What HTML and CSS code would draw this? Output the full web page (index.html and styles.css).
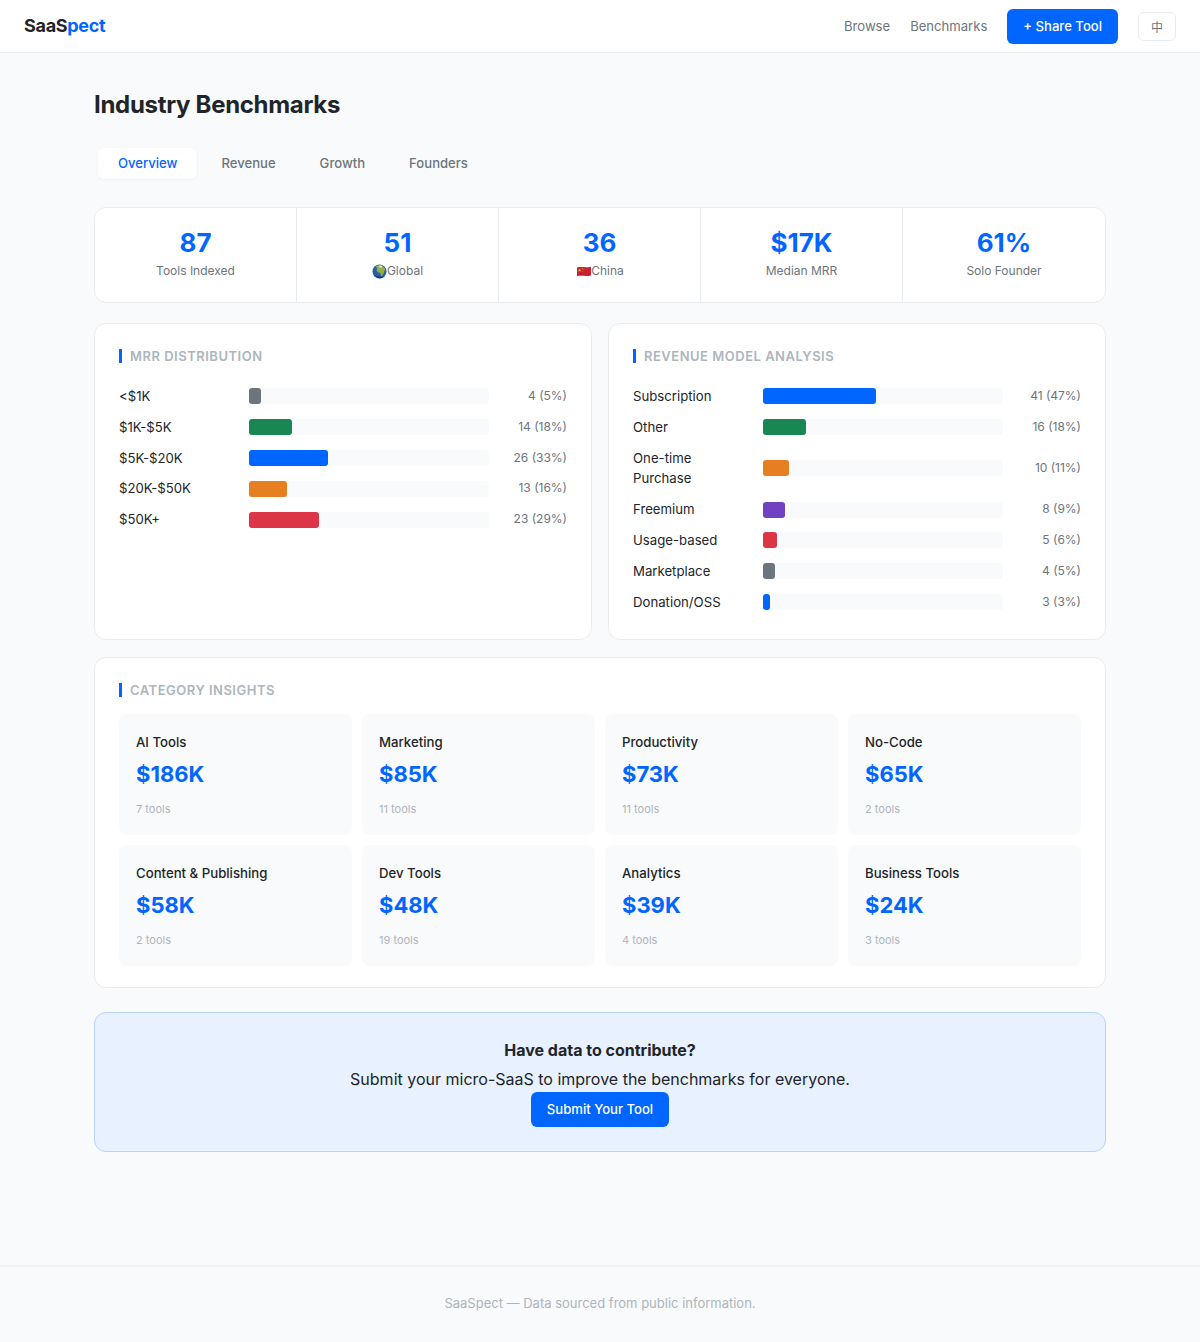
FILE: index.html
```html
<!DOCTYPE html>
<html lang="en">
    <head>
        <meta charset="utf-8">
        <title>SaaSpect - Industry Benchmarks</title>
        <link rel="stylesheet" href="styles.css">
    </head>
    <body>
        <nav class='nav'>
            <a class='logo'>SaaS<span class='logo-accent'>pect</span></a>
            <div class='nav-links'>
                <a class='nav-link'>Browse</a>
                <a class='nav-link'>Benchmarks</a>
                <a class='btn nav-share'>+ Share Tool</a>
                <button class='lang'>中</button>
            </div>
        </nav>
        <main class='page'>
            <h1 class='title'>Industry Benchmarks</h1>
            <div class='tabs'>
                <div class='tab active'>Overview</div>
                <div class='tab'>Revenue</div>
                <div class='tab'>Growth</div>
                <div class='tab'>Founders</div>
            </div>

            <div class='stats'>
                <div class='stat'>
                    <div class='stat-value'>87</div>
                    <div class='stat-label'>Tools Indexed</div>
                </div>
                <div class='stat'>
                    <div class='stat-value'>51</div>
                    <div class='stat-label'>
                        <svg class='globe' viewBox="0 0 16 16">
                            <circle cx="8" cy="8" r="7.5" fill="#2a5fa8"/>
                            <path d="M4 2.5c2-1.400 5-1.600 7-.6l2.600 2.600c.6 1.200.4 2.400-.2 2.800l-1 2.600-2 3.200c-.8.4-1.200-.4-1.200-1.400L9 9.400 6.600 9 4.800 7 5.400 4.800z" fill="#8fb04a"/>
                            <path d="M7 2c1.500-.6 3-.5 4 .2L10 4 7.800 3.600z" fill="#dfe6c8"/>
                            <path d="M2 11c1 2 3 3.800 6 4.300 2 0 4-1 5.400-2.600-3 1.600-8 1.400-11.400-1.700z" fill="#14306b"/>
                        </svg><span>Global</span>
                    </div>
                </div>
                <div class='stat'>
                    <div class='stat-value'>36</div>
                    <div class='stat-label'>
                        <svg class='flag' viewBox="0 0 13 10">
                            <path d="M0 1.200c4-1 8 .6 13-.6v8.200c-5 1.200-9-.4-13 .6z" fill="#c9202f"/>
                            <path d="M2.400 2.200l.5 1.100 1.100.1-.9.700.3 1.100-1-.6-1 .6.300-1.100-.9-.7 1.100-.1z" fill="#f0c93c"/>
                            <circle cx="5" cy="2" r=".4" fill="#f0c93c"/>
                            <circle cx="5.600" cy="3.200" r=".4" fill="#f0c93c"/>
                            <circle cx="5.400" cy="4.600" r=".4" fill="#f0c93c"/>
                        </svg><span>China</span>
                    </div>
                </div>
                <div class='stat'>
                    <div class='stat-value'>$17K</div>
                    <div class='stat-label'>Median MRR</div>
                </div>
                <div class='stat'>
                    <div class='stat-value'>61%</div>
                    <div class='stat-label'>Solo Founder</div>
                </div>
            </div>

            <div class='panels'>
                <section class='card'>
                    <h2 class='card-title'>MRR Distribution</h2>
                    <div class='row'>
                        <div class='row-label'>&lt;$1K</div>
                        <div class='track'><div class='fill gray' style="width: 5%"></div></div>
                        <div class='row-value'>4 (5%)</div>
                    </div>
                    <div class='row'>
                        <div class='row-label'>$1K-$5K</div>
                        <div class='track'><div class='fill green' style="width: 18%"></div></div>
                        <div class='row-value'>14 (18%)</div>
                    </div>
                    <div class='row'>
                        <div class='row-label'>$5K-$20K</div>
                        <div class='track'><div class='fill blue' style="width: 33%"></div></div>
                        <div class='row-value'>26 (33%)</div>
                    </div>
                    <div class='row'>
                        <div class='row-label'>$20K-$50K</div>
                        <div class='track'><div class='fill orange' style="width: 16%"></div></div>
                        <div class='row-value'>13 (16%)</div>
                    </div>
                    <div class='row'>
                        <div class='row-label'>$50K+</div>
                        <div class='track'><div class='fill red' style="width: 29%"></div></div>
                        <div class='row-value'>23 (29%)</div>
                    </div>
                </section>
                <section class='card'>
                    <h2 class='card-title'>Revenue Model Analysis</h2>
                    <div class='row'>
                        <div class='row-label'>Subscription</div>
                        <div class='track'><div class='fill blue' style="width: 47%"></div></div>
                        <div class='row-value'>41 (47%)</div>
                    </div>
                    <div class='row'>
                        <div class='row-label'>Other</div>
                        <div class='track'><div class='fill green' style="width: 18%"></div></div>
                        <div class='row-value'>16 (18%)</div>
                    </div>
                    <div class='row'>
                        <div class='row-label'>One-time Purchase</div>
                        <div class='track'><div class='fill orange' style="width: 11%"></div></div>
                        <div class='row-value'>10 (11%)</div>
                    </div>
                    <div class='row'>
                        <div class='row-label'>Freemium</div>
                        <div class='track'><div class='fill purple' style="width: 9%"></div></div>
                        <div class='row-value'>8 (9%)</div>
                    </div>
                    <div class='row'>
                        <div class='row-label'>Usage-based</div>
                        <div class='track'><div class='fill red' style="width: 6%"></div></div>
                        <div class='row-value'>5 (6%)</div>
                    </div>
                    <div class='row'>
                        <div class='row-label'>Marketplace</div>
                        <div class='track'><div class='fill gray' style="width: 5%"></div></div>
                        <div class='row-value'>4 (5%)</div>
                    </div>
                    <div class='row'>
                        <div class='row-label'>Donation/OSS</div>
                        <div class='track'><div class='fill blue' style="width: 3%"></div></div>
                        <div class='row-value'>3 (3%)</div>
                    </div>
                </section>
            </div>

            <section class='card insights'>
                <h2 class='card-title'>Category Insights</h2>
                <div class='insight-grid'>
                    <div class='insight'>
                        <div class='insight-name'>AI Tools</div>
                        <div class='insight-value'>$186K</div>
                        <div class='insight-count'>7 tools</div>
                    </div>
                    <div class='insight'>
                        <div class='insight-name'>Marketing</div>
                        <div class='insight-value'>$85K</div>
                        <div class='insight-count'>11 tools</div>
                    </div>
                    <div class='insight'>
                        <div class='insight-name'>Productivity</div>
                        <div class='insight-value'>$73K</div>
                        <div class='insight-count'>11 tools</div>
                    </div>
                    <div class='insight'>
                        <div class='insight-name'>No-Code</div>
                        <div class='insight-value'>$65K</div>
                        <div class='insight-count'>2 tools</div>
                    </div>
                    <div class='insight'>
                        <div class='insight-name'>Content &amp; Publishing</div>
                        <div class='insight-value'>$58K</div>
                        <div class='insight-count'>2 tools</div>
                    </div>
                    <div class='insight'>
                        <div class='insight-name'>Dev Tools</div>
                        <div class='insight-value'>$48K</div>
                        <div class='insight-count'>19 tools</div>
                    </div>
                    <div class='insight'>
                        <div class='insight-name'>Analytics</div>
                        <div class='insight-value'>$39K</div>
                        <div class='insight-count'>4 tools</div>
                    </div>
                    <div class='insight'>
                        <div class='insight-name'>Business Tools</div>
                        <div class='insight-value'>$24K</div>
                        <div class='insight-count'>3 tools</div>
                    </div>
                </div>
            </section>

            <section class='cta'>
                <h3 class='cta-title'>Have data to contribute?</h3>
                <p class='cta-text'>Submit your micro-SaaS to improve the benchmarks for everyone.</p>
                <a class='btn cta-button'>Submit Your Tool</a>
            </section>
        </main>
        <footer class='footer'>SaaSpect — Data sourced from public information.</footer>
    </body>
</html>
```

FILE: styles.css
```css
* {
    box-sizing: border-box;
}
body {
    margin: 0;
    background: #f9fafb;
    color: #212529;
    font-family: Inter, "Liberation Sans", sans-serif;
}
.nav {
    height: 53px;
    padding: 0 24px;
    display: flex;
    justify-content: space-between;
    align-items: center;
    background: white;
    border-bottom: 1px solid #e9ecef;
}
.logo {
    font-size: 18px;
    font-weight: 700;
    letter-spacing: -0.3px;
    margin-top: -1px;
}
.logo-accent {
    color: #0066ff;
}
.nav-links {
    display: flex;
    align-items: center;
    gap: 20px;
}
.nav-link {
    font-size: 13.1px;
    color: #6c757d;
}
.btn {
    background: #0066ff;
    color: white;
    border-radius: 6px;
    font-size: 13.1px;
    font-weight: 500;
    line-height: 35px;
    height: 35px;
}
.nav-share {
    padding: 0 16px;
}
.lang {
    width: 38px;
    height: 29px;
    padding: 0;
    background: white;
    border: 1px solid #e9ecef;
    border-radius: 6px;
    color: #6c757d;
    font-family: "Noto Sans CJK SC", sans-serif;
    font-size: 12px;
}
.page {
    width: 1012px;
    height: 1212px;
    margin: 0 auto;
    padding-top: 32px;
}
.title {
    margin: 0;
    font-size: 24px;
    line-height: 40px;
    font-weight: 700;
    letter-spacing: -0.3px;
}
.tabs {
    display: flex;
    gap: 4px;
    margin-top: 23px;
    padding: 0 4px;
}
.tab {
    padding: 0 20px;
    height: 31px;
    line-height: 31px;
    font-size: 13.1px;
    font-weight: 500;
    color: #6c757d;
    border-radius: 6px;
}
.tab.active {
    background: white;
    color: #0066ff;
    box-shadow: 0 1px 3px rgba(0, 0, 0, 0.06);
}
.stats {
    display: grid;
    grid-template-columns: repeat(5, 1fr);
    height: 96px;
    margin-top: 28px;
    background: white;
    border: 1px solid #e9ecef;
    border-radius: 12px;
}
.stat {
    padding-top: 18px;
    text-align: center;
    border-right: 1px solid #e9ecef;
}
.stat:last-child {
    border-right: none;
}
.stat-value {
    color: #0066ff;
    font-size: 26px;
    line-height: 34px;
    font-weight: 700;
}
.stat-label {
    display: flex;
    justify-content: center;
    align-items: center;
    margin-top: 1px;
    font-size: 12px;
    line-height: 20px;
    color: #6c757d;
}
.globe {
    width: 15px;
    height: 15px;
}
.flag {
    width: 14px;
    height: 11px;
    margin-left: 2px;
}
.panels {
    display: grid;
    grid-template-columns: 1fr 1fr;
    gap: 16px;
    margin-top: 20px;
}
.card {
    height: 317px;
    padding: 25px 24px 24px;
    background: white;
    border: 1px solid #e9ecef;
    border-radius: 12px;
}
.card-title {
    margin: 0 0 23px;
    padding-left: 8px;
    border-left: 3px solid #0066ff;
    font-size: 13px;
    line-height: 14px;
    font-weight: 600;
    letter-spacing: 0.5px;
    text-transform: uppercase;
    color: #adb5bd;
}
.row {
    display: flex;
    align-items: center;
    margin-bottom: 10px;
    font-size: 13.2px;
    line-height: 20.8px;
}
.row-label {
    width: 130px;
    flex-shrink: 0;
    padding-right: 12px;
}
.track {
    flex: 1;
    height: 16px;
    background: #f9fafb;
    border-radius: 4px;
}
.fill {
    height: 100%;
    border-radius: 3px;
}
.gray { background: #6c757d; }
.green { background: #198754; }
.blue { background: #0066ff; }
.orange { background: #e67e22; }
.red { background: #dc3545; }
.purple { background: #6f42c1; }
.row-value {
    width: 78px;
    flex-shrink: 0;
    text-align: right;
    font-size: 12px;
    color: #6c757d;
}
.insights {
    height: 331px;
    margin-top: 17px;
}
.insights .card-title {
    margin-bottom: 17px;
}
.insight-grid {
    display: grid;
    grid-template-columns: repeat(4, 1fr);
    gap: 10px;
}
.insight {
    height: 121px;
    padding: 18px 17px;
    background: #f9fafb;
    border-radius: 8px;
}
.insight-name {
    font-size: 13.2px;
    line-height: 21px;
    font-weight: 500;
}
.insight-value {
    margin-top: 7px;
    color: #0066ff;
    font-size: 22px;
    line-height: 29px;
    font-weight: 700;
}
.insight-count {
    margin-top: 12px;
    font-size: 11px;
    line-height: 16px;
    color: #adb5bd;
}
.cta {
    height: 140px;
    margin-top: 24px;
    padding-top: 26px;
    text-align: center;
    background: #e7f1ff;
    border: 1px solid #b6d4fe;
    border-radius: 12px;
}
.cta-title {
    margin: 0;
    font-size: 16px;
    line-height: 22px;
    font-weight: 700;
}
.cta-text {
    margin: 7px 0 0;
    font-size: 16px;
    line-height: 22px;
}
.cta-button {
    display: inline-block;
    margin-top: 2px;
    padding: 0 16px;
}
.footer {
    height: 78px;
    border-top: 2px solid #f1f3f5;
    padding-top: 26px;
    text-align: center;
    font-size: 13px;
    line-height: 20px;
    color: #adb5bd;
}
```
